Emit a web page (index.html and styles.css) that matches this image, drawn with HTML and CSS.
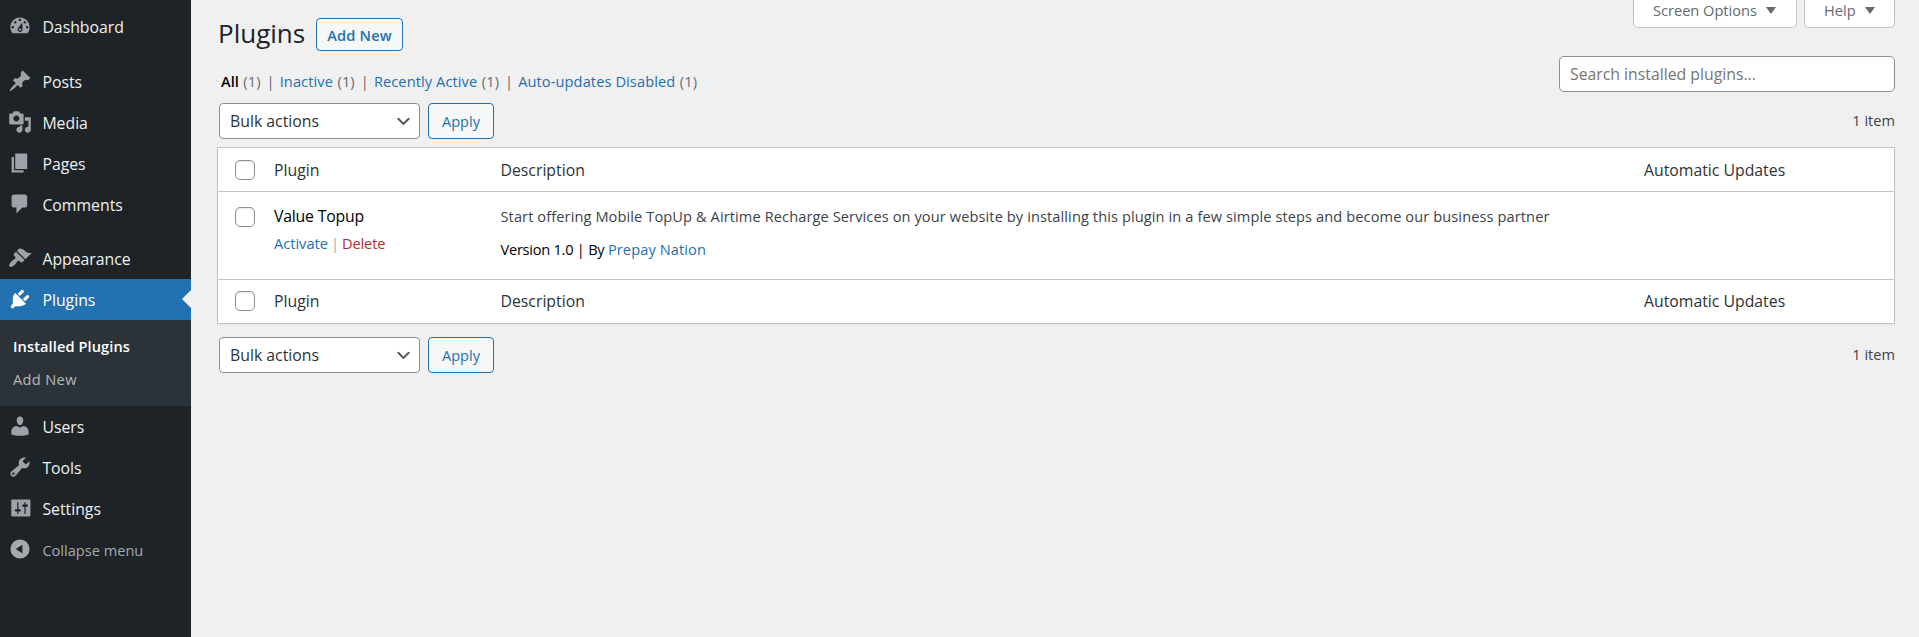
FILE: index.html
```html
<!DOCTYPE html>
<html lang="en">
<head>
<meta charset="utf-8">
<title>Plugins</title>
<link rel="stylesheet" href="styles.css">
</head>
<body>
<div class="layout">
<nav class="sidebar">
  <a class="item"><svg class="icon" viewBox="0 0 20 20"><path d="M3.76 16h12.48c1.1-1.37 1.76-3.11 1.76-5 0-4.42-3.58-8-8-8s-8 3.58-8 8c0 1.89.66 3.63 1.76 5zM10 4c.55 0 1 .45 1 1s-.45 1-1 1-1-.45-1-1 .45-1 1-1zM6 6c.55 0 1 .45 1 1s-.45 1-1 1-1-.45-1-1 .45-1 1-1zm8 0c.55 0 1 .45 1 1s-.45 1-1 1-1-.45-1-1 .45-1 1-1zm-5.37 5.55L12 7v6c0 1.1-.9 2-2 2s-2-.9-2-2c0-.57.24-1.08.63-1.45zM4 10c.55 0 1 .45 1 1s-.45 1-1 1-1-.45-1-1 .45-1 1-1zm12 0c.55 0 1 .45 1 1s-.45 1-1 1-1-.45-1-1 .45-1 1-1zm-5 3c0-.55-.45-1-1-1s-1 .45-1 1 .45 1 1 1 1-.45 1-1z"/></svg><span>Dashboard</span></a>
  <div class="separator"></div>
  <a class="item"><svg class="icon" viewBox="0 0 20 20"><path d="M10.44 3.02l1.82-1.82 6.36 6.35-1.83 1.82c-1.05-.68-2.48-.57-3.41.36l-.75.75c-.92.93-1.04 2.35-.35 3.41l-1.83 1.82-2.41-2.41-2.8 2.79c-.42.42-3.38 2.71-3.8 2.29s1.86-3.39 2.28-3.81l2.79-2.79L4.1 9.36l1.83-1.82c1.05.69 2.48.57 3.4-.36l.75-.75c.93-.92 1.05-2.35.36-3.41z"/></svg><span>Posts</span></a>
  <a class="item"><svg class="icon" viewBox="0 0 20 20"><path d="M13 11V4c0-.55-.45-1-1-1h-1.67L9 1H5L3.67 3H2c-.55 0-1 .45-1 1v7c0 .55.45 1 1 1h10c.55 0 1-.45 1-1zM7 4.5c1.38 0 2.5 1.12 2.5 2.5S8.38 9.5 7 9.5 4.5 8.38 4.5 7 5.62 4.5 7 4.5zM14 6h5v10.5c0 1.38-1.12 2.5-2.5 2.5S14 17.88 14 16.5s1.12-2.5 2.5-2.5c.17 0 .34.02.5.05V9h-3V6zm-4 8.05V13h2v3.5c0 1.38-1.12 2.5-2.5 2.5S7 17.88 7 16.5 8.12 14 9.5 14c.17 0 .34.02.5.05z"/></svg><span>Media</span></a>
  <a class="item"><svg class="icon" viewBox="0 0 20 20"><path d="M6 15V2h10v13H6zm-1 1h8v2H3V5h2v11z"/></svg><span>Pages</span></a>
  <a class="item"><svg class="icon" viewBox="0 0 20 20"><path d="M5 2h9c1.1 0 2 .9 2 2v7c0 1.1-.9 2-2 2h-2l-5 5v-5H5c-1.1 0-2-.9-2-2V4c0-1.1.9-2 2-2z"/></svg><span>Comments</span></a>
  <div class="separator small"></div>
  <a class="item"><svg class="icon" viewBox="0 0 20 20"><path d="M14.48 11.06L7.41 3.99l1.5-1.5c.5-.56 2.3-.47 3.51.32 1.21.8 1.43 1.28 2.91 2.1 1.18.64 2.45 1.26 4.45.85zm-.71.71L6.7 4.7 4.93 6.47c-.39.39-.39 1.02 0 1.41l1.06 1.06c.39.39.39 1.03 0 1.42-.6.6-1.43 1.11-2.21 1.69-.35.26-.7.53-1.01.84C1.43 14.23.4 16.08 1.4 17.07c.99 1 2.84-.03 4.18-1.36.31-.31.58-.66.85-1.02.57-.78 1.08-1.61 1.69-2.21.39-.39 1.02-.39 1.41 0l1.06 1.06c.39.39 1.02.39 1.41 0z"/></svg><span>Appearance</span></a>
  <a class="item current"><svg class="icon" viewBox="0 0 20 20"><path d="M13.11 4.36L9.87 7.6 8 5.73l3.24-3.24c.35-.34 1.05-.2 1.56.32.52.51.66 1.21.31 1.55zm-8 1.77l.91-1.12 9.01 9.01-1.19.84c-.71.71-2.63 1.16-3.82 1.16H6.14L4.9 17.26c-.59.59-1.54.59-2.12 0-.59-.58-.59-1.53 0-2.12l1.24-1.24v-3.88c0-1.13.4-3.19 1.09-3.89zm7.26 3.97l3.24-3.24c.34-.35 1.04-.21 1.55.31.52.51.66 1.21.31 1.55l-3.24 3.25z"/></svg><span>Plugins</span></a>
  <div class="submenu">
    <a class="sub active">Installed Plugins</a>
    <a class="sub">Add New</a>
  </div>
  <a class="item"><svg class="icon" viewBox="0 0 20 20"><path d="M10 9.25c-2.27 0-2.73-3.44-2.73-3.44C7 4.02 7.82 2 9.97 2c2.16 0 2.98 2.02 2.71 3.81 0 0-.41 3.44-2.68 3.44zm0 2.1L12.72 10c2.39 0 4.52 2.33 4.52 4.53v2.49s-3.65 1.13-7.24 1.13c-3.65 0-7.24-1.13-7.24-1.13v-2.49c0-2.25 1.94-4.53 4.47-4.53z"/></svg><span>Users</span></a>
  <a class="item"><svg class="icon" viewBox="0 0 20 20"><path d="M16.68 9.77c-1.34 1.34-3.3 1.67-4.95.99l-5.41 6.52c-.99.99-2.59.99-3.58 0s-.99-2.59 0-3.57l6.52-5.42c-.68-1.65-.35-3.61.99-4.95 1.28-1.28 3.12-1.62 4.72-1.06l-2.89 2.89 2.82 2.82 2.86-2.87c.53 1.58.18 3.39-1.08 4.65zM3.81 16.21c.4.39 1.04.39 1.43 0 .4-.4.4-1.04 0-1.43-.39-.4-1.03-.4-1.43 0-.39.39-.39 1.03 0 1.43z"/></svg><span>Tools</span></a>
  <a class="item"><svg class="icon" viewBox="-.7 0 20 20"><path d="M18 16V4c0-.55-.45-1-1-1H3c-.55 0-1 .45-1 1v12c0 .55.45 1 1 1h14c.55 0 1-.45 1-1zM8 11h1c.55 0 1 .45 1 1s-.45 1-1 1H8v1.5c0 .28-.22.5-.5.5s-.5-.22-.5-.5V13H6c-.55 0-1-.45-1-1s.45-1 1-1h1V5.5c0-.28.22-.5.5-.5s.5.22.5.5V11zm5-2h-1c-.55 0-1-.45-1-1s.45-1 1-1h1V5.5c0-.28.22-.5.5-.5s.5.22.5.5V7h1c.55 0 1 .45 1 1s-.45 1-1 1h-1v5.5c0 .28-.22.5-.5.5s-.5-.22-.5-.5V9z"/></svg><span>Settings</span></a>
  <a class="item collapse"><svg class="icon" viewBox="0 0 20 20"><path fill-rule="evenodd" d="M10 2a8 8 0 1 0 0 16a8 8 0 1 0 0-16zM12 6.4v7.2L6.4 10z"/></svg><span>Collapse menu</span></a>
</nav>
<main class="content">
  <div class="screen-tabs">
    <button class="tab options">Screen Options</button>
    <button class="tab help">Help</button>
  </div>
  <div class="head">
    <h1 class="title">Plugins</h1>
    <a class="button add-new">Add New</a>
  </div>
  <div class="tools">
    <ul class="filters">
      <li><b class="all">All</b> <i>(1)</i></li>
      <li><a class="link">Inactive</a> <i>(1)</i></li>
      <li><a class="link">Recently Active</a> <i>(1)</i></li>
      <li><a class="link">Auto-updates Disabled</a> <i>(1)</i></li>
    </ul>
    <div class="search">Search installed plugins...</div>
  </div>
  <div class="tablenav">
    <div class="select"><span>Bulk actions</span><svg class="chevron" viewBox="0 0 20 20"><path d="M5 6l5 5 5-5 2 1-7 7-7-7z"/></svg></div>
    <a class="button apply">Apply</a>
    <span class="count">1 item</span>
  </div>
  <div class="table">
    <div class="row head-row"><span class="check"></span><span>Plugin</span><span>Description</span><span>Automatic Updates</span></div>
    <div class="row plugin">
      <span class="check"></span>
      <div><div class="name">Value Topup</div><div class="actions"><a class="link">Activate</a><span class="bar">|</span><a class="delete">Delete</a></div></div>
      <div><div class="desc">Start offering Mobile TopUp &amp; Airtime Recharge Services on your website by installing this plugin in a few simple steps and become our business partner</div><div class="meta">Version 1.0 | By <a class="link">Prepay Nation</a></div></div>
    </div>
    <div class="row head-row foot-row"><span class="check"></span><span>Plugin</span><span>Description</span><span>Automatic Updates</span></div>
  </div>
  <div class="tablenav bottom">
    <div class="select"><span>Bulk actions</span><svg class="chevron" viewBox="0 0 20 20"><path d="M5 6l5 5 5-5 2 1-7 7-7-7z"/></svg></div>
    <a class="button apply">Apply</a>
    <span class="count">1 item</span>
  </div>
</main>
</div>
</body>
</html>
```

FILE: styles.css
```css
* { box-sizing: border-box; }
body {
  margin: 0;
  background: #f0f0f1;
  color: #3c434a;
  font-family: "Open Sans", "Noto Sans", sans-serif;
  font-size: 14.6px;
  line-height: 20px;
}
i { font-style: normal; }
.layout { display: flex; height: 637px; overflow: hidden; }

.sidebar {
  flex: none;
  width: 191px;
  padding-top: 6px;
  background: #1d2327;
  color: #f0f0f1;
}
.item {
  display: flex;
  align-items: center;
  height: 41px;
  padding-left: 8.4px;
  font-size: 15.8px;
}
.item span { margin-left: 10px; white-space: nowrap; }
.icon { flex: none; width: 24px; height: 24px; margin-bottom: 1.5px; fill: #9ca2a7; }
.separator { height: 14px; }
.separator.small { height: 13px; }
.current { position: relative; background: #2271b1; color: #fff; }
.current .icon { fill: #fff; }
.current::after {
  content: "";
  position: absolute;
  right: 0;
  top: 11px;
  border: 9.5px solid transparent;
  border-left: 0;
  border-right-color: #f0f0f1;
}
.submenu { height: 86px; padding: 10px 0 0 13px; background: #2c3338; }
.sub { display: block; height: 33px; line-height: 33px; color: #b5b9bd; letter-spacing: .35px; }
.sub.active { color: #fff; font-weight: 600; letter-spacing: .1px; }
.collapse { color: #a7aaad; font-size: 14.6px; }
.collapse .icon { fill: #a7aaad; }

.content { position: relative; flex: 1; padding: 16px 24px 0 26px; }
.screen-tabs { position: absolute; top: 0; right: 24px; display: flex; gap: 7px; }
.tab {
  display: flex;
  align-items: center;
  gap: 9px;
  height: 28px;
  padding: 0 19px 7px;
  border: 1px solid #c3c4c7;
  border-top: 0;
  border-radius: 0 0 5px 5px;
  background: #fff;
  color: #646970;
  font: inherit;
}
.tab::after {
  content: "";
  border: 5px solid transparent;
  border-top: 7px solid #646970;
  border-bottom: 0;
}
.tab.options { width: 164px; }
.tab.help { width: 91px; }

.head { display: flex; align-items: center; gap: 11px; height: 37px; padding-left: 1px; }
.title { width: 87px; margin: 0 0 3px; color: #1d2327; font-size: 26px; font-weight: 400; }
.button {
  display: flex;
  align-items: center;
  justify-content: center;
  border: 1px solid #2271b1;
  border-radius: 4px;
  background: #f6f7f7;
  color: #2271b1;
}
.add-new { width: 87px; height: 33px; font-weight: 600; letter-spacing: .2px; }

.tools { display: flex; justify-content: space-between; height: 50px; padding-top: 3px; }
.filters { display: flex; margin: 15px 0 0; padding: 0 0 0 4px; list-style: none; color: #646970; letter-spacing: .1px; }
.filters i { margin-left: .6px; }
.filters li + li::before { content: "|"; margin: 0 5px 0 6px; }
.all { color: #000; font-weight: 600; letter-spacing: 0; }
.link { color: #2271b1; }
.search {
  width: 336px;
  height: 36px;
  padding-left: 10px;
  border: 1px solid #8c8f94;
  border-radius: 5px;
  background: #fff;
  color: #757575;
  font-size: 15.8px;
  line-height: 34px;
}

.tablenav { display: flex; align-items: center; height: 36px; padding-left: 2px; }
.select {
  display: flex;
  align-items: center;
  justify-content: space-between;
  width: 201px;
  height: 36px;
  margin-right: 8px;
  padding: 0 6px 0 10px;
  border: 1px solid #8c8f94;
  border-radius: 4px;
  background: #fff;
  color: #2c3338;
  font-size: 15.8px;
}
.chevron { width: 19px; height: 19px; fill: #555; }
.apply { width: 66px; height: 36px; }
.count { margin: 0 0 2px auto; }

.table {
  margin-top: 8px;
  border: 1px solid #c3c4c7;
  background: #fff;
  box-shadow: 0 1px 1px rgba(0, 0, 0, .04);
}
.row { display: grid; grid-template-columns: 39px 226.5px 1143.5px 1fr; padding-left: 17px; }
.row + .row { border-top: 1px solid #c3c4c7; }
.head-row { height: 43px; align-items: center; color: #2c3338; font-size: 15.8px; }
.row.foot-row { height: 44px; padding-bottom: 2px; }
.row.plugin { height: 88px; padding-top: 14px; }
.check {
  width: 20px;
  height: 20px;
  border: 1px solid #8c8f94;
  border-radius: 5px;
  background: #fff;
  box-shadow: inset 0 1px 2px rgba(0, 0, 0, .1);
}
.plugin .check { margin-top: 1px; }
.name { color: #000; font-size: 15.8px; letter-spacing: -.2px; }
.actions { display: flex; gap: 3px; margin-top: 7px; }
.bar { color: #a7aaad; }
.delete { color: #b32d2e; letter-spacing: -.1px; }
.desc { white-space: nowrap; letter-spacing: .1px; }
.meta { margin-top: 13px; color: #000; letter-spacing: -.25px; }
.meta .link { letter-spacing: .1px; }
.bottom { margin-top: 13px; }
```
